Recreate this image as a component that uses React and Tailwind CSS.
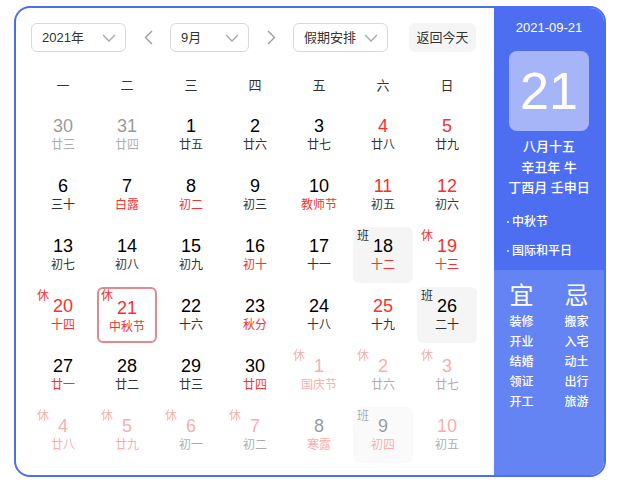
import { useState } from 'react';

// ─────────────────────────────────────────
// Data
// ─────────────────────────────────────────
const WEEK = ['一', '二', '三', '四', '五', '六', '日'];

// n: day, l: lunar, o: other month, rn: red number, rl: red lunar, tag: 休/班, sel: selected
const DAYS = [
  { n: 30, l: '廿三', o: true }, { n: 31, l: '廿四', o: true }, { n: 1, l: '廿五' }, { n: 2, l: '廿六' },
  { n: 3, l: '廿七' }, { n: 4, l: '廿八', rn: true }, { n: 5, l: '廿九', rn: true },

  { n: 6, l: '三十' }, { n: 7, l: '白露', rl: true }, { n: 8, l: '初二', rl: true }, { n: 9, l: '初三' },
  { n: 10, l: '教师节', rl: true }, { n: 11, l: '初五', rn: true }, { n: 12, l: '初六', rn: true },

  { n: 13, l: '初七' }, { n: 14, l: '初八' }, { n: 15, l: '初九' }, { n: 16, l: '初十', rl: true },
  { n: 17, l: '十一' }, { n: 18, l: '十二', rl: true, tag: '班' }, { n: 19, l: '十三', rn: true, rl: true, tag: '休' },

  { n: 20, l: '十四', rn: true, rl: true, tag: '休' }, { n: 21, l: '中秋节', rn: true, rl: true, tag: '休', sel: true },
  { n: 22, l: '十六' }, { n: 23, l: '秋分', rl: true }, { n: 24, l: '十八' }, { n: 25, l: '十九', rn: true },
  { n: 26, l: '二十', tag: '班' },

  { n: 27, l: '廿一', rl: true }, { n: 28, l: '廿二' }, { n: 29, l: '廿三' }, { n: 30, l: '廿四', rl: true },
  { n: 1, l: '国庆节', o: true, rn: true, rl: true, tag: '休' }, { n: 2, l: '廿六', o: true, rn: true, tag: '休' },
  { n: 3, l: '廿七', o: true, rn: true, tag: '休' },

  { n: 4, l: '廿八', o: true, rn: true, rl: true, tag: '休' }, { n: 5, l: '廿九', o: true, rn: true, rl: true, tag: '休' },
  { n: 6, l: '初一', o: true, rn: true, tag: '休' }, { n: 7, l: '初二', o: true, rn: true, tag: '休' },
  { n: 8, l: '寒露', o: true, rl: true }, { n: 9, l: '初四', o: true, rl: true, tag: '班' },
  { n: 10, l: '初五', o: true, rn: true },
];

const YI = ['装修', '开业', '结婚', '领证', '开工'];
const JI = ['搬家', '入宅', '动土', '出行', '旅游'];

const FONT = { fontFamily: '"Liberation Sans", Arial, "Noto Sans CJK SC", sans-serif' };

// ─────────────────────────────────────────
// Small pieces
// ─────────────────────────────────────────
const Chevron = () => (
  <svg width="14" height="8" viewBox="0 0 14 8" fill="none">
    <polyline points="1,1 7,7 13,1" stroke="#a3a6ae" strokeWidth="1.3" />
  </svg>
);

const Arrow = ({ dir }) => (
  <svg width="9" height="15" viewBox="0 0 9 15" fill="none">
    <polyline
      points={dir === 'left' ? '8,1 1.5,7.5 8,14' : '1,1 7.5,7.5 1,14'}
      stroke="#9a9da6"
      strokeWidth="1.4"
    />
  </svg>
);

const Select = ({ label, width }) => (
  <div
    className={`h-[29px] ${width} border border-[#d7d9e0] rounded-[6px] bg-white flex items-center justify-between pl-[10px] pr-[9px] text-[13px] text-[#333]`}
  >
    <span>{label}</span>
    <Chevron />
  </div>
);

const DayCell = ({ d }) => {
  const numColor = d.rn ? 'text-[#f73131]' : 'text-black';
  const lunarColor = d.rl ? 'text-[#f73131]' : 'text-[#333]';
  return (
    <div className={`m-[2px] h-[56px] relative ${d.o ? 'opacity-40' : ''}`}>
      <div
        className={`absolute inset-0 rounded-[6px] flex flex-col items-center pt-[9px] ${
          d.tag === '班' ? 'bg-[#f5f5f6]' : ''
        } ${d.sel ? 'border-2 border-[#e3898d] pt-[7px]' : ''}`}
      >
        <span className={`text-[18px] leading-[20px] ${numColor}`}>{d.n}</span>
        <span className={`mt-[1px] text-[12px] leading-[16px] ${lunarColor}`}>{d.l}</span>
      </div>
      {d.tag && (
        <span
          className={`absolute left-[4px] top-[1px] text-[12px] leading-[16px] ${
            d.tag === '休' ? 'text-[#f73131]' : 'text-[#333]'
          }`}
        >
          {d.tag}
        </span>
      )}
    </div>
  );
};

// ─────────────────────────────────────────
// Main
// ─────────────────────────────────────────
const App = () => {
  const [days] = useState(DAYS);

  return (
    <div className="w-[623px] h-[486px] bg-white pt-[6px] pl-[14px]" style={FONT}>
      <div className="w-[592px] h-[471px] border-2 border-[#4e6ef2] rounded-[16px] overflow-hidden flex bg-white">

        {/* Calendar */}
        <div className="w-[478px] px-[15px] pt-[15px]">
          {/* Toolbar */}
          <div className="flex items-center">
            <Select label="2021年" width="w-[95px]" />
            <div className="w-[44px] flex justify-center"><Arrow dir="left" /></div>
            <Select label="9月" width="w-[79px]" />
            <div className="w-[44px] flex justify-center"><Arrow dir="right" /></div>
            <Select label="假期安排" width="w-[95px]" />
            <div className="ml-[21px] h-[29px] w-[67px] rounded-[6px] bg-[#f5f5f6] flex items-center justify-center text-[13px] text-[#333]">
              返回今天
            </div>
          </div>

          {/* Week header */}
          <div className="grid grid-cols-7 w-[448px] mt-[15px] h-[38px] items-center">
            {WEEK.map((w) => (
              <span key={w} className="text-center text-[13px] text-[#333]">{w}</span>
            ))}
          </div>

          {/* Days */}
          <div className="grid grid-cols-7 w-[448px]">
            {days.map((d, i) => (
              <DayCell key={i} d={d} />
            ))}
          </div>
        </div>

        {/* Side panel */}
        <div className="flex-1 flex flex-col text-white">
          <div className="h-[262px] bg-[#4e6ef2] flex flex-col items-center pt-[11px]">
            <span className="text-[13px] leading-[18px]">2021-09-21</span>
            <div className="mt-[14px] w-[80px] h-[80px] rounded-[8px] bg-[#a5b5f8] flex items-center justify-center text-[52px] leading-none">
              21
            </div>
            <div className="mt-[6px] flex flex-col items-center text-[13px] leading-[20.5px] font-medium">
              <span>八月十五</span>
              <span>辛丑年 牛</span>
              <span>丁酉月 壬申日</span>
            </div>
            <div className="self-start pl-[13px] mt-[15px] flex flex-col gap-[13px] text-[12px] leading-[16px] font-medium">
              <span className="flex items-center gap-[3px]"><span className="w-[2px] h-[2px] bg-white rounded-full" />中秋节</span>
              <span className="flex items-center gap-[3px]"><span className="w-[2px] h-[2px] bg-white rounded-full" />国际和平日</span>
            </div>
          </div>

          <div className="flex-1 bg-[#6584f4] grid grid-cols-2 pt-[11px]">
            {[{ h: '宜', list: YI }, { h: '忌', list: JI }].map((col) => (
              <div key={col.h} className="flex flex-col items-center">
                <span className="text-[24px] leading-[30px] mb-[1px]">{col.h}</span>
                {col.list.map((t) => (
                  <span key={t} className="text-[12px] leading-[20px] font-medium">{t}</span>
                ))}
              </div>
            ))}
          </div>
        </div>
      </div>
    </div>
  );
};

export default App;
